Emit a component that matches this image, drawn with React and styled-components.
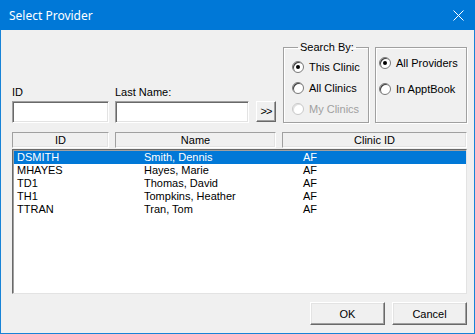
import React, { useState } from 'react'
import styled, { createGlobalStyle } from 'styled-components'

const Global = createGlobalStyle`
  html, body { margin: 0; padding: 0; background: #f0f0f0; }
  * { box-sizing: border-box; }
`

const providers = [
  { id: 'DSMITH', name: 'Smith, Dennis', clinic: 'AF' },
  { id: 'MHAYES', name: 'Hayes, Marie', clinic: 'AF' },
  { id: 'TD1', name: 'Thomas, David', clinic: 'AF' },
  { id: 'TH1', name: 'Tompkins, Heather', clinic: 'AF' },
  { id: 'TTRAN', name: 'Tran, Tom', clinic: 'AF' },
]

export default function App() {
  const [selected, setSelected] = useState(0)
  const [searchBy, setSearchBy] = useState('this')
  const [scope, setScope] = useState('all')

  return (
    <Window>
      <Global />
      <TitleBar>
        <span>Select Provider</span>
        <CloseBtn>
          <svg width="11" height="11" viewBox="0 0 11 11">
            <path d="M0.5 0.5 L10.5 10.5 M10.5 0.5 L0.5 10.5" stroke="#fff" strokeWidth="1" />
          </svg>
        </CloseBtn>
      </TitleBar>

      <Content>
        <TopRow>
          <Field width={97} gap={6}>
            <Label>ID</Label>
            <Input />
          </Field>
          <Field width={134} gap={7}>
            <Label>Last Name:</Label>
            <Input />
          </Field>
          <GoBtn>&gt;&gt;</GoBtn>
          <Group width={86} gap={6} pad={8}>
            <legend>Search By:</legend>
            <Radios gap={8}>
              <Radio checked={searchBy === 'this'} onClick={() => setSearchBy('this')} label="This Clinic" />
              <Radio checked={searchBy === 'all'} onClick={() => setSearchBy('all')} label="All Clinics" />
              <Radio disabled label="My Clinics" />
            </Radios>
          </Group>
          <Group width={92} pad={3} plain>
            <Radios gap={13} top={8}>
              <Radio checked={scope === 'all'} onClick={() => setScope('all')} label="All Providers" />
              <Radio checked={scope === 'appt'} onClick={() => setScope('appt')} label="In ApptBook" />
            </Radios>
          </Group>
        </TopRow>

        <HeaderRow>
          <HeaderCell width={97}>ID</HeaderCell>
          <HeaderCell width={161}>Name</HeaderCell>
          <HeaderCell width={185}>Clinic ID</HeaderCell>
        </HeaderRow>

        <List>
          {providers.map((p, i) => (
            <Row key={p.id} active={i === selected} onClick={() => setSelected(i)}>
              <span>{p.id}</span>
              <span>{p.name}</span>
              <span>{p.clinic}</span>
            </Row>
          ))}
        </List>

        <Footer>
          <Button>OK</Button>
          <Button>Cancel</Button>
        </Footer>
      </Content>
    </Window>
  )
}

function Radio({ checked, disabled, label, onClick }) {
  return (
    <RadioRow disabled={disabled} onClick={disabled ? undefined : onClick}>
      <Circle disabled={disabled}>{checked && <Dot />}</Circle>
      <span>{label}</span>
    </RadioRow>
  )
}

const Window = styled.div`
  width: 475px;
  height: 334px;
  display: flex;
  flex-direction: column;
  background: #f0f0f0;
  border: 1px solid #1883d7;
  border-top: none;
  font-family: "Liberation Sans", Arial, sans-serif;
  font-size: 11px;
  color: #000;
`

const TitleBar = styled.div`
  height: 30px;
  margin: 0 -1px;
  background: #0078d7;
  color: #fff;
  display: flex;
  align-items: center;
  justify-content: space-between;
  padding: 0 11px 0 9px;
  font-family: "Noto Sans", "Liberation Sans", sans-serif;
  font-size: 12px;
`

const CloseBtn = styled.div`
  display: flex;
  align-items: center;
  padding-top: 1px;
`

const Content = styled.div`
  flex: 1;
  display: flex;
  flex-direction: column;
  padding: 11px 7px 8px 11px;
`

const TopRow = styled.div`
  height: 82px;
  display: flex;
  align-items: flex-end;
`

const Field = styled.div`
  width: ${p => p.width}px;
  flex-shrink: 0;
  margin-right: ${p => p.gap}px;
  display: flex;
  flex-direction: column;
`

const Label = styled.div`
  height: 13px;
  line-height: 13px;
  margin-bottom: 2px;
`

const Input = styled.input`
  height: 22px;
  width: 100%;
  background: #fff;
  border-style: solid;
  border-width: 1px;
  border-color: #a0a0a0 #ffffff #ffffff #a0a0a0;
  box-shadow: inset 1px 1px 0 #696969, inset -1px -1px 0 #e3e3e3;
  outline: none;
  font: inherit;
  padding: 2px 3px;
`

const GoBtn = styled.button`
  width: 20px;
  height: 21px;
  flex-shrink: 0;
  margin: 0 7px 1px 0;
  padding: 0;
  background: #f0f0f0;
  border-style: solid;
  border-width: 1px;
  border-color: #ffffff #696969 #696969 #ffffff;
  box-shadow: inset -1px -1px 0 #a0a0a0;
  font: inherit;
  font-size: 11px;
  line-height: 17px;
  letter-spacing: -1px;
`

const Group = styled.fieldset`
  width: ${p => p.width}px;
  height: ${p => (p.plain ? 76 : 82)}px;
  flex-shrink: 0;
  margin: 0 ${p => p.gap || 0}px 0 0;
  padding: 0 0 0 ${p => p.pad}px;
  border: 1px solid #a0a0a0;
  box-shadow: inset 1px 1px 0 #fff, 1px 1px 0 #fff;
  min-width: 0;

  legend {
    padding: 0 2px;
    margin-left: 6px;
    line-height: 13px;
  }
`

const Radios = styled.div`
  display: flex;
  flex-direction: column;
  gap: ${p => p.gap}px;
  padding-top: ${p => p.top || 6}px;
`

const RadioRow = styled.div`
  display: flex;
  align-items: center;
  gap: 5px;
  height: 13px;
  white-space: nowrap;
  color: ${p => (p.disabled ? '#a0a0a0' : '#000')};
  cursor: default;
`

const Circle = styled.div`
  width: 12px;
  height: 12px;
  border-radius: 50%;
  background: #fff;
  border: 1px solid ${p => (p.disabled ? '#c8c8c8' : '#7a7a7a')};
  box-shadow: inset 1px 1px 0 ${p => (p.disabled ? '#e0e0e0' : '#404040')};
  display: flex;
  align-items: center;
  justify-content: center;
  flex-shrink: 0;
`

const Dot = styled.div`
  width: 4px;
  height: 4px;
  border-radius: 50%;
  background: #000;
`

const HeaderRow = styled.div`
  display: flex;
  gap: 6px;
  margin-top: 9px;
  height: 16px;
`

const HeaderCell = styled.div`
  width: ${p => p.width}px;
  height: 16px;
  border-style: solid;
  border-width: 1px;
  border-color: #a0a0a0 #ffffff #ffffff #a0a0a0;
  box-shadow: inset -1px -1px 0 #e3e3e3;
  text-align: center;
  line-height: 14px;
`

const List = styled.div`
  margin-top: 1px;
  height: 145px;
  width: 455px;
  background: #fff;
  border-style: solid;
  border-width: 1px;
  border-color: #696969 #e3e3e3 #e3e3e3 #696969;
  box-shadow: inset 1px 1px 0 #a0a0a0;
  padding: 1px 0 0 1px;
`

const Row = styled.div`
  display: grid;
  grid-template-columns: 127px 159px 1fr;
  height: 13px;
  line-height: 13px;
  padding-left: 3px;
  background: ${p => (p.active ? '#0078d7' : 'transparent')};
  color: ${p => (p.active ? '#fff' : '#000')};
  cursor: default;
`

const Footer = styled.div`
  display: flex;
  justify-content: flex-end;
  gap: 7px;
  margin-top: 8px;
`

const Button = styled.button`
  width: 75px;
  height: 23px;
  padding: 0;
  background: #f0f0f0;
  border-style: solid;
  border-width: 1px;
  border-color: #ffffff #696969 #696969 #ffffff;
  box-shadow: inset -1px -1px 0 #a0a0a0, inset 1px 1px 0 #e3e3e3;
  font: inherit;
  font-size: 11px;
  color: #000;
`
